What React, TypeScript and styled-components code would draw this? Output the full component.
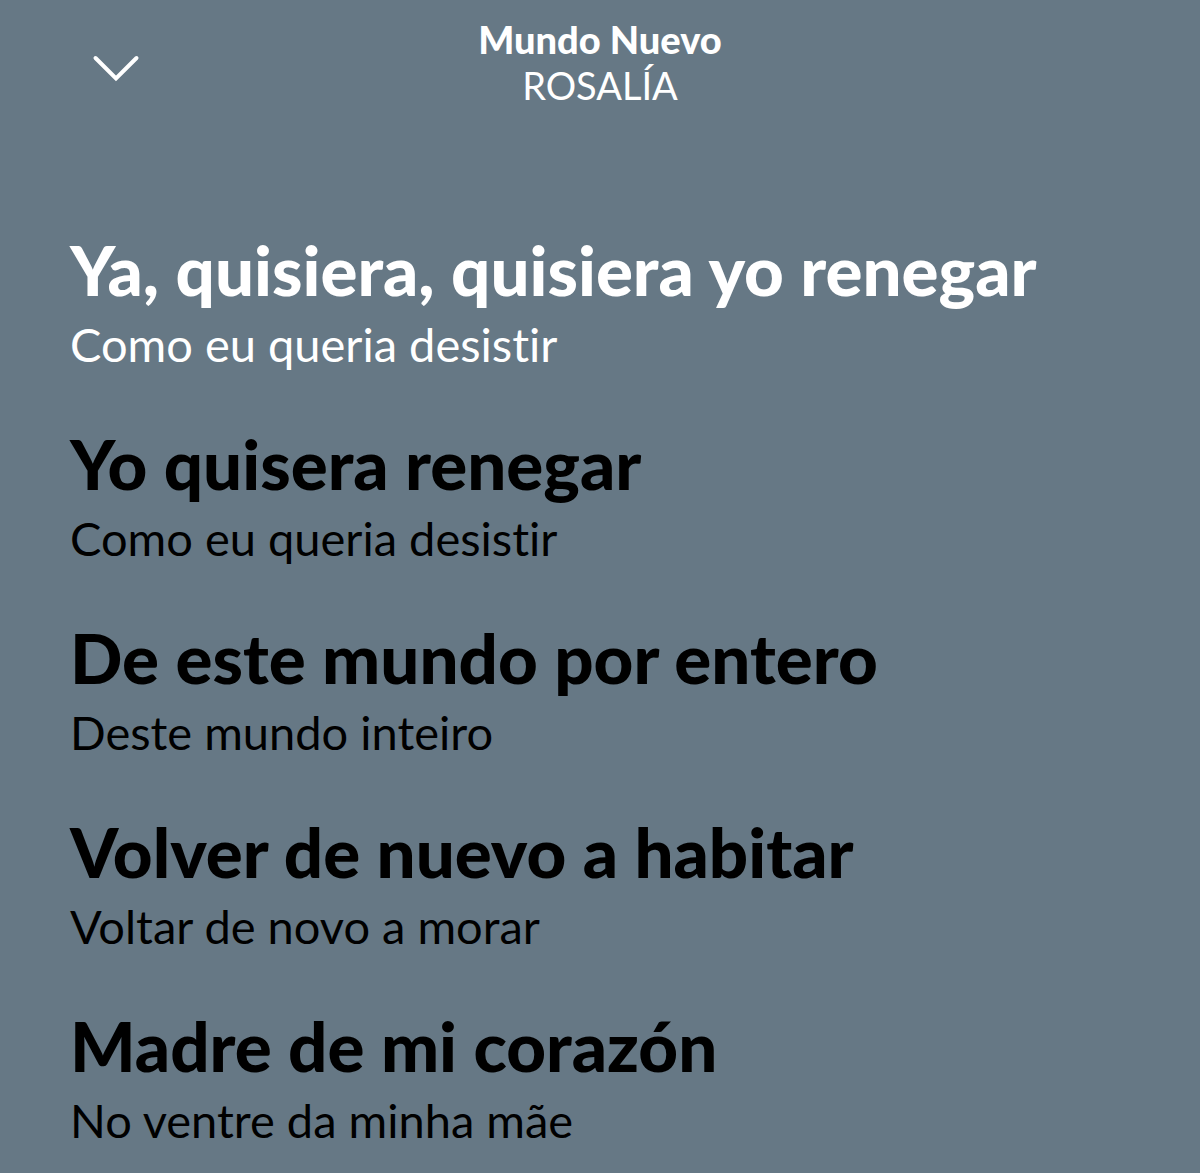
import React from "react";
import styled, { createGlobalStyle } from "styled-components";

const GlobalStyle = createGlobalStyle`
  *, *::before, *::after { box-sizing: border-box; }
  body {
    margin: 0;
    background: #667885;
    font-family: Lato, "Noto Sans", sans-serif;
    font-variant-ligatures: none;
  }
`;

const Page = styled.div`
  min-height: 100vh;
  background: #667885;
  color: #000;
`;

const Header = styled.header`
  display: grid;
  grid-template-columns: 48px 1fr 48px;
  align-items: center;
  padding: 16px 92px 0;
  color: #fff;
`;

const CollapseButton = styled.button`
  display: flex;
  align-items: center;
  justify-content: center;
  width: 48px;
  height: 48px;
  padding: 0;
  border: 0;
  background: none;
  color: inherit;
  cursor: pointer;
`;

const TrackInfo = styled.div`
  text-align: center;
  font-size: 38px;
  line-height: 46px;
`;

const TrackTitle = styled.h1`
  margin: 0;
  font-size: inherit;
  font-weight: 900;
`;

const Artist = styled.p`
  margin: 0;
`;

const Lyrics = styled.main`
  display: flex;
  flex-direction: column;
  gap: 50px;
  padding: 122px 70px 24px;
`;

const Verse = styled.section<{ $active?: boolean }>`
  display: flex;
  flex-direction: column;
  gap: 4px;
  color: ${({ $active }) => ($active ? "#fff" : "#000")};
`;

const Original = styled.h2`
  margin: 0;
  font-size: 69px;
  font-weight: 900;
  line-height: 80px;
`;

const Translation = styled.p`
  margin: 0;
  font-size: 47px;
  line-height: 60px;
`;

const verses = [
  { original: "Ya, quisiera, quisiera yo renegar", translation: "Como eu queria desistir" },
  { original: "Yo quisera renegar", translation: "Como eu queria desistir" },
  { original: "De este mundo por entero", translation: "Deste mundo inteiro" },
  { original: "Volver de nuevo a habitar", translation: "Voltar de novo a morar" },
  { original: "Madre de mi corazón", translation: "No ventre da minha mãe" },
];

export default function App() {
  return (
    <Page>
      <GlobalStyle />
      <Header>
        <CollapseButton type="button" aria-label="Close lyrics">
          <svg width="48" height="48" viewBox="0 0 48 48" fill="none" aria-hidden="true">
            <path d="M3.5 20 24 40.5 44.5 20" stroke="currentColor" strokeWidth="4" strokeLinecap="round" />
          </svg>
        </CollapseButton>
        <TrackInfo>
          <TrackTitle>Mundo Nuevo</TrackTitle>
          <Artist>ROSALÍA</Artist>
        </TrackInfo>
      </Header>
      <Lyrics>
        {verses.map((verse, index) => (
          <Verse key={verse.original} $active={index === 0}>
            <Original lang="es">{verse.original}</Original>
            <Translation lang="pt">{verse.translation}</Translation>
          </Verse>
        ))}
      </Lyrics>
    </Page>
  );
}
